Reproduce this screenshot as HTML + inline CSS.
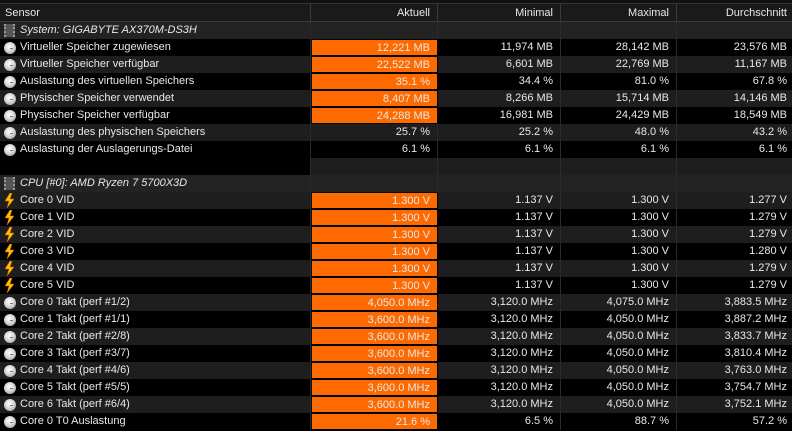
<!DOCTYPE html>
<html><head><meta charset="utf-8"><style>
*{margin:0;padding:0;box-sizing:border-box}
body{width:792px;height:420px;overflow:hidden;background:#000;font-family:"Liberation Sans",sans-serif;font-size:11px;color:#e8e8e8;position:relative}
.top{position:absolute;left:0;top:0;width:792px;height:4px;background:#111;border-bottom:1px solid #333}
.r{position:absolute;left:0;width:792px;height:17px;line-height:17px;white-space:nowrap}
.c{position:absolute;top:0;height:17px;text-align:right;padding-right:7px}
.c0{left:0;width:311px;text-align:left;padding-left:20px;border-right:1px solid #2a2a2a}
.c1{left:311px;width:127px;border-right:1px solid #2a2a2a}
.c2{left:438px;width:123px;border-right:1px solid #2a2a2a}
.c3{left:561px;width:116px;border-right:1px solid #2a2a2a}
.c4{left:677px;width:115px;padding-right:5px}
.g{background:#1e1e1e}
.b{background:#000}
.o{background:#ff6a00;border:1px solid #000;border-left:1px solid #111}
.hd{top:4px;height:18px;line-height:18px;background:#1a1a1a;border-bottom:1px solid #3a3a3a}
.hd .c{height:18px;border-right:1px solid #3a3a3a}
.hd .c0{padding-left:5px}
.grp{background:#232323}
.grp .c0{font-style:italic;background:#232323}
.ic,.chip,.bolt{z-index:2}
.ic{position:absolute;left:4px;top:3px;width:12px;height:12px;border-radius:50%;background:radial-gradient(circle at 45% 40%,#fff 0,#ddd 40%,#888 100%)}
.ic:after{content:"";position:absolute;left:6px;top:6px;width:3px;height:1px;background:#777}
.chip{position:absolute;left:4px;top:2px;width:11px;height:13px;background:#555;border-left:2px dotted #999;border-right:2px dotted #999}
.bolt{position:absolute;left:5px;top:1px}
</style></head><body>
<div class="top"></div>
<div class="r hd"><div class="c c0">Sensor</div><div class="c c1">Aktuell</div><div class="c c2">Minimal</div><div class="c c3">Maximal</div><div class="c c4" style="border:0">Durchschnitt</div></div>

<div class="r grp" style="top:22px"><span class="chip"></span><div class="c c0">System: GIGABYTE AX370M-DS3H</div><div class="c c1"></div><div class="c c2"></div><div class="c c3"></div><div class="c c4"></div></div>

<div class="r b" style="top:39px"><span class="ic"></span><div class="c c0">Virtueller Speicher zugewiesen</div><div class="c c1 o">12,221 MB</div><div class="c c2">11,974 MB</div><div class="c c3">28,142 MB</div><div class="c c4">23,576 MB</div></div>
<div class="r g" style="top:56px"><span class="ic"></span><div class="c c0">Virtueller Speicher verfügbar</div><div class="c c1 o">22,522 MB</div><div class="c c2">6,601 MB</div><div class="c c3">22,769 MB</div><div class="c c4">11,167 MB</div></div>
<div class="r b" style="top:73px"><span class="ic"></span><div class="c c0">Auslastung des virtuellen Speichers</div><div class="c c1 o">35.1 %</div><div class="c c2">34.4 %</div><div class="c c3">81.0 %</div><div class="c c4">67.8 %</div></div>
<div class="r g" style="top:90px"><span class="ic"></span><div class="c c0">Physischer Speicher verwendet</div><div class="c c1 o">8,407 MB</div><div class="c c2">8,266 MB</div><div class="c c3">15,714 MB</div><div class="c c4">14,146 MB</div></div>
<div class="r b" style="top:107px"><span class="ic"></span><div class="c c0">Physischer Speicher verfügbar</div><div class="c c1 o">24,288 MB</div><div class="c c2">16,981 MB</div><div class="c c3">24,429 MB</div><div class="c c4">18,549 MB</div></div>
<div class="r g" style="top:124px"><span class="ic"></span><div class="c c0">Auslastung des physischen Speichers</div><div class="c c1">25.7 %</div><div class="c c2">25.2 %</div><div class="c c3">48.0 %</div><div class="c c4">43.2 %</div></div>
<div class="r b" style="top:141px"><span class="ic"></span><div class="c c0">Auslastung der Auslagerungs-Datei</div><div class="c c1">6.1 %</div><div class="c c2">6.1 %</div><div class="c c3">6.1 %</div><div class="c c4">6.1 %</div></div>
<div class="r g" style="top:158px"><div class="c c0" style="background:#000"></div><div class="c c1"></div><div class="c c2"></div><div class="c c3"></div><div class="c c4"></div></div>

<div class="r grp" style="top:175px"><span class="chip"></span><div class="c c0">CPU [#0]: AMD Ryzen 7 5700X3D</div><div class="c c1"></div><div class="c c2"></div><div class="c c3"></div><div class="c c4"></div></div>

<div class="r g" style="top:192px"><svg class="bolt" width="9" height="15" viewBox="0 0 9 15"><path d="M5 0L0 8h4l-2 7 7-9H5l2-6z" fill="#ffc400" stroke="#c06000" stroke-width=".6"/></svg><div class="c c0">Core 0 VID</div><div class="c c1 o">1.300 V</div><div class="c c2">1.137 V</div><div class="c c3">1.300 V</div><div class="c c4">1.277 V</div></div>
<div class="r b" style="top:209px"><svg class="bolt" width="9" height="15" viewBox="0 0 9 15"><path d="M5 0L0 8h4l-2 7 7-9H5l2-6z" fill="#ffc400" stroke="#c06000" stroke-width=".6"/></svg><div class="c c0">Core 1 VID</div><div class="c c1 o">1.300 V</div><div class="c c2">1.137 V</div><div class="c c3">1.300 V</div><div class="c c4">1.279 V</div></div>
<div class="r g" style="top:226px"><svg class="bolt" width="9" height="15" viewBox="0 0 9 15"><path d="M5 0L0 8h4l-2 7 7-9H5l2-6z" fill="#ffc400" stroke="#c06000" stroke-width=".6"/></svg><div class="c c0">Core 2 VID</div><div class="c c1 o">1.300 V</div><div class="c c2">1.137 V</div><div class="c c3">1.300 V</div><div class="c c4">1.279 V</div></div>
<div class="r b" style="top:243px"><svg class="bolt" width="9" height="15" viewBox="0 0 9 15"><path d="M5 0L0 8h4l-2 7 7-9H5l2-6z" fill="#ffc400" stroke="#c06000" stroke-width=".6"/></svg><div class="c c0">Core 3 VID</div><div class="c c1 o">1.300 V</div><div class="c c2">1.137 V</div><div class="c c3">1.300 V</div><div class="c c4">1.280 V</div></div>
<div class="r g" style="top:260px"><svg class="bolt" width="9" height="15" viewBox="0 0 9 15"><path d="M5 0L0 8h4l-2 7 7-9H5l2-6z" fill="#ffc400" stroke="#c06000" stroke-width=".6"/></svg><div class="c c0">Core 4 VID</div><div class="c c1 o">1.300 V</div><div class="c c2">1.137 V</div><div class="c c3">1.300 V</div><div class="c c4">1.279 V</div></div>
<div class="r b" style="top:277px"><svg class="bolt" width="9" height="15" viewBox="0 0 9 15"><path d="M5 0L0 8h4l-2 7 7-9H5l2-6z" fill="#ffc400" stroke="#c06000" stroke-width=".6"/></svg><div class="c c0">Core 5 VID</div><div class="c c1 o">1.300 V</div><div class="c c2">1.137 V</div><div class="c c3">1.300 V</div><div class="c c4">1.279 V</div></div>

<div class="r g" style="top:294px"><span class="ic"></span><div class="c c0">Core 0 Takt (perf #1/2)</div><div class="c c1 o">4,050.0 MHz</div><div class="c c2">3,120.0 MHz</div><div class="c c3">4,075.0 MHz</div><div class="c c4">3,883.5 MHz</div></div>
<div class="r b" style="top:311px"><span class="ic"></span><div class="c c0">Core 1 Takt (perf #1/1)</div><div class="c c1 o">3,600.0 MHz</div><div class="c c2">3,120.0 MHz</div><div class="c c3">4,050.0 MHz</div><div class="c c4">3,887.2 MHz</div></div>
<div class="r g" style="top:328px"><span class="ic"></span><div class="c c0">Core 2 Takt (perf #2/8)</div><div class="c c1 o">3,600.0 MHz</div><div class="c c2">3,120.0 MHz</div><div class="c c3">4,050.0 MHz</div><div class="c c4">3,833.7 MHz</div></div>
<div class="r b" style="top:345px"><span class="ic"></span><div class="c c0">Core 3 Takt (perf #3/7)</div><div class="c c1 o">3,600.0 MHz</div><div class="c c2">3,120.0 MHz</div><div class="c c3">4,050.0 MHz</div><div class="c c4">3,810.4 MHz</div></div>
<div class="r g" style="top:362px"><span class="ic"></span><div class="c c0">Core 4 Takt (perf #4/6)</div><div class="c c1 o">3,600.0 MHz</div><div class="c c2">3,120.0 MHz</div><div class="c c3">4,050.0 MHz</div><div class="c c4">3,763.0 MHz</div></div>
<div class="r b" style="top:379px"><span class="ic"></span><div class="c c0">Core 5 Takt (perf #5/5)</div><div class="c c1 o">3,600.0 MHz</div><div class="c c2">3,120.0 MHz</div><div class="c c3">4,050.0 MHz</div><div class="c c4">3,754.7 MHz</div></div>
<div class="r g" style="top:396px"><span class="ic"></span><div class="c c0">Core 6 Takt (perf #6/4)</div><div class="c c1 o">3,600.0 MHz</div><div class="c c2">3,120.0 MHz</div><div class="c c3">4,050.0 MHz</div><div class="c c4">3,752.1 MHz</div></div>
<div class="r b" style="top:413px"><span class="ic"></span><div class="c c0">Core 0 T0 Auslastung</div><div class="c c1 o">21.6 %</div><div class="c c2">6.5 %</div><div class="c c3">88.7 %</div><div class="c c4">57.2 %</div></div>
</body></html>
